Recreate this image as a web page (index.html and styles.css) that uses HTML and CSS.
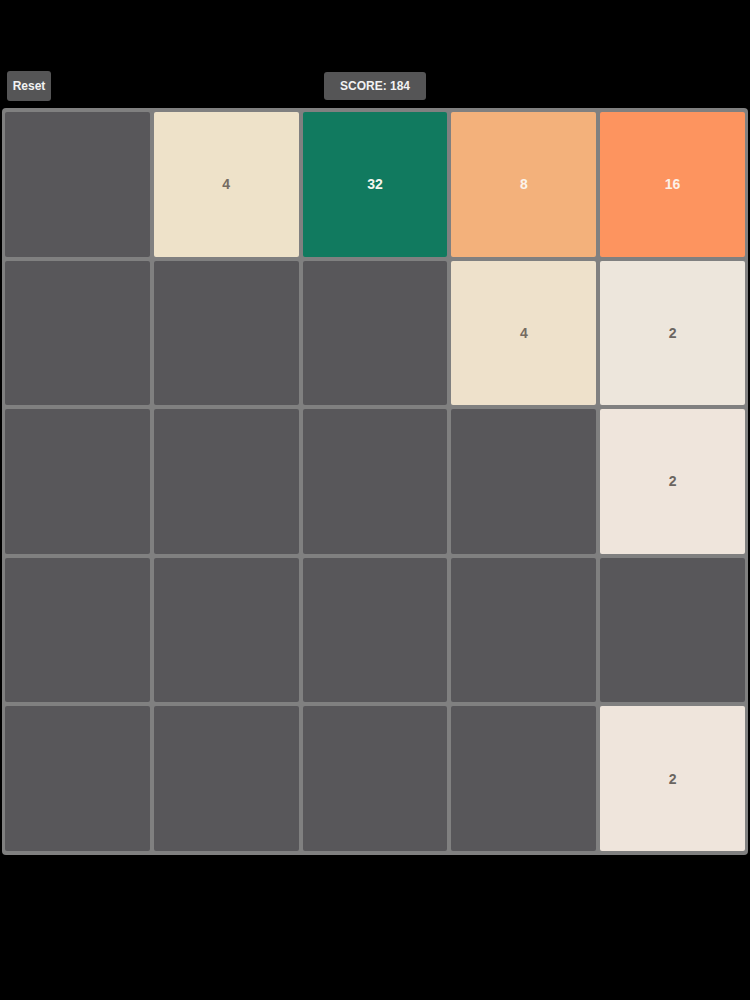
FILE: index.html
```html
<!DOCTYPE html>
<html>
<head>
<meta charset="utf-8">
<link rel="stylesheet" href="styles.css">
</head>
<body>
<div class="page">
  <div class="header">
    <div class="left"><button class="btn reset">Reset</button></div>
    <div class="btn score">SCORE: 184</div>
    <div></div>
  </div>
  <div class="board">
    <div class="tile"></div>
    <div class="tile t4">4</div>
    <div class="tile t32">32</div>
    <div class="tile t8">8</div>
    <div class="tile t16">16</div>

    <div class="tile"></div>
    <div class="tile"></div>
    <div class="tile"></div>
    <div class="tile t4b">4</div>
    <div class="tile t2">2</div>

    <div class="tile"></div>
    <div class="tile"></div>
    <div class="tile"></div>
    <div class="tile"></div>
    <div class="tile t2b">2</div>

    <div class="tile"></div>
    <div class="tile"></div>
    <div class="tile"></div>
    <div class="tile"></div>
    <div class="tile"></div>

    <div class="tile"></div>
    <div class="tile"></div>
    <div class="tile"></div>
    <div class="tile"></div>
    <div class="tile t2c">2</div>
  </div>
</div>
</body>
</html>
```

FILE: styles.css
```css
html, body {
  margin: 0;
  padding: 0;
  background: #000;
  font-family: "Liberation Sans", Arial, sans-serif;
}
.page {
  width: 750px;
  height: 1000px;
  padding-top: 71px;
  box-sizing: border-box;
}
.header {
  display: grid;
  grid-template-columns: 1fr auto 1fr;
  align-items: start;
  height: 30px;
  padding: 0 7px;
}
.left {
  display: flex;
}
.btn {
  background: #555556;
  color: #f2f2f2;
  font-weight: bold;
  font-size: 12px;
  border: none;
  border-radius: 3px;
  font-family: "Liberation Sans", Arial, sans-serif;
  display: flex;
  align-items: center;
  justify-content: center;
  box-sizing: border-box;
}
.reset {
  width: 44px;
  height: 30px;
  padding: 0;
}
.score {
  width: 102px;
  height: 28px;
  margin-top: 1px;
}
.board {
  margin: 7px 0 0 2px;
  width: 746px;
  height: 747px;
  box-sizing: border-box;
  background: #808080;
  border-radius: 4px;
  padding: 4px 3px 4px 3px;
  display: grid;
  grid-template-columns: repeat(5, 1fr);
  grid-template-rows: repeat(5, 1fr);
  gap: 4px;
}
.tile {
  background: #58575a;
  border-radius: 2px;
  display: flex;
  align-items: center;
  justify-content: center;
  font-weight: bold;
  font-size: 14px;
  color: #746b62;
}
.t4 { background: #eee2c9; }
.t4b { background: #eee1cb; }
.t32 { background: #117a5f; color: #f6f6f0; }
.t8 { background: #f3b17b; color: #fbf3ea; }
.t16 { background: #fd945f; color: #fcf0e6; }
.t2 { background: #ede6dc; color: #6a6560; }
.t2b { background: #efe5dc; color: #6a6560; }
.t2c { background: #efe5dc; color: #6a6560; }
```
